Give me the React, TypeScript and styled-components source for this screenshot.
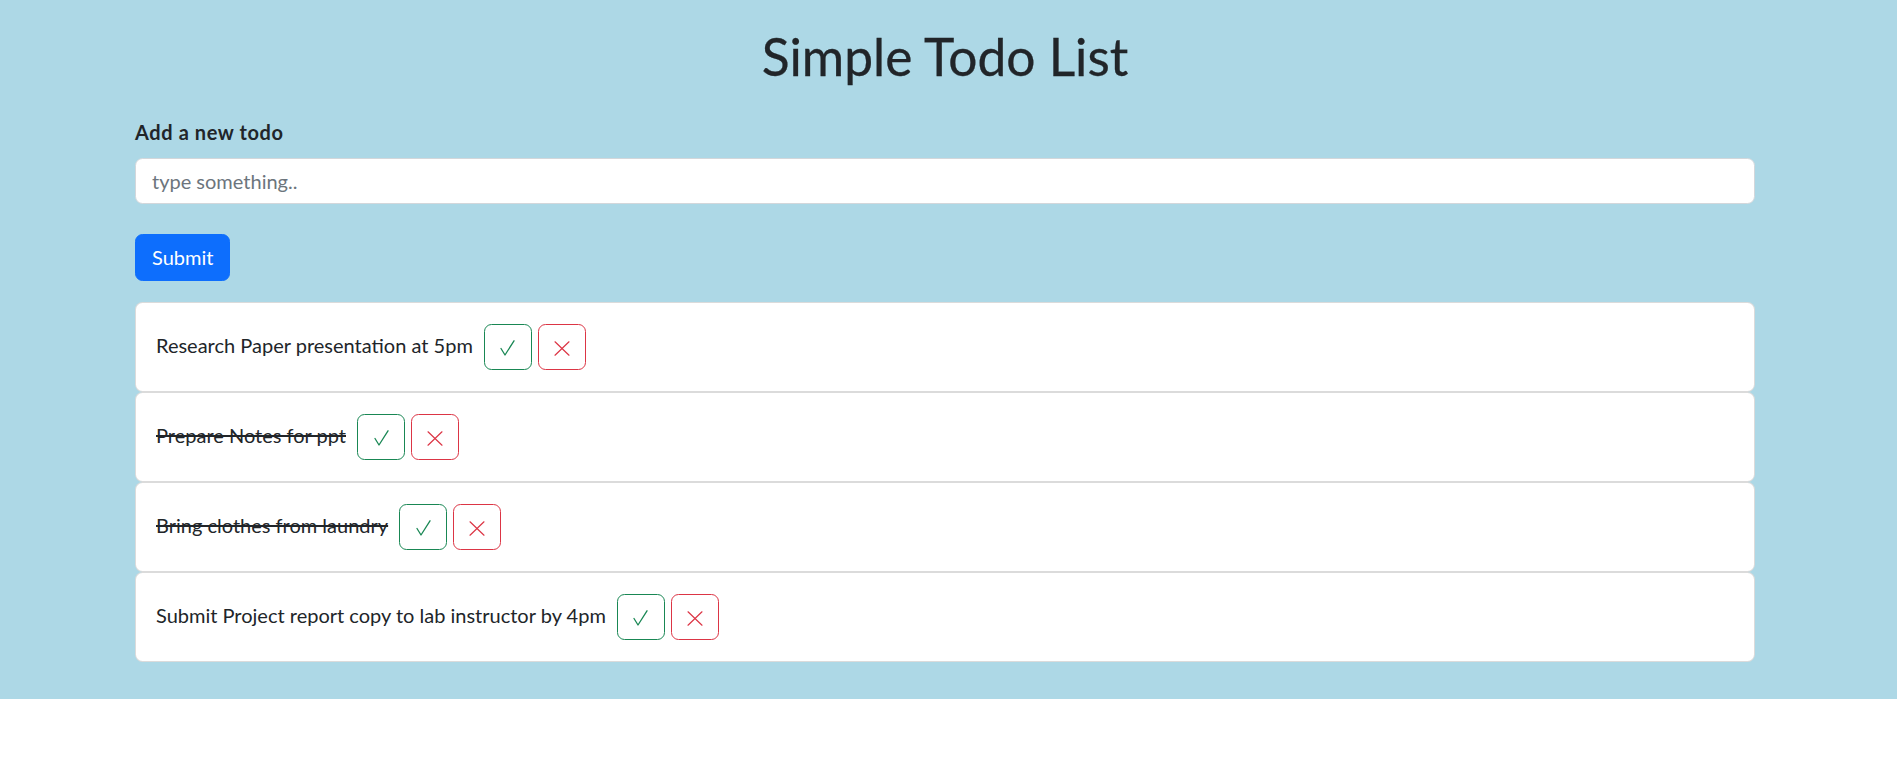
import React from "react";
import styled, { createGlobalStyle } from "styled-components";

const GlobalStyle = createGlobalStyle`
  html, body {
    margin: 0;
    padding: 0;
    background: #ffffff;
  }
  body {
    font-family: Lato, "Noto Sans", sans-serif;
    color: #212529;
  }
  * { box-sizing: border-box; }
`;

const Page = styled.div`
  background: #add8e6;
  padding: 26px 0 37px;
`;

const Container = styled.div`
  margin: 0 142px 0 135px;
`;

const Title = styled.h1`
  margin: 0 0 29px;
  font-size: 51.5px;
  font-weight: 400;
  line-height: 1.2;
  text-align: center;
  color: #212529;
  -webkit-text-stroke: 0.3px #212529;
`;

const Form = styled.form`
  display: flex;
  flex-direction: column;
  align-items: flex-start;
  margin-bottom: 21px;
`;

const Label = styled.label`
  display: block;
  font-size: 20px;
  font-weight: 700;
  line-height: 30px;
  letter-spacing: 0.6px;
  margin-bottom: 11px;
`;

const Input = styled.input`
  width: 100%;
  height: 46px;
  padding: 0 16px;
  border: 1px solid #d3d7db;
  border-radius: 7.5px;
  background: #ffffff;
  font-family: Lato, "Noto Sans", sans-serif;
  font-size: 20px;
  color: #212529;
  margin-bottom: 30px;
  outline: none;
  &::placeholder {
    color: #6c757d;
  }
`;

const SubmitButton = styled.button`
  height: 47px;
  padding: 0 16px;
  border: 1px solid #0d6efd;
  border-radius: 7.5px;
  background: #0d6efd;
  color: #ffffff;
  font-family: Lato, "Noto Sans", sans-serif;
  font-size: 20px;
  line-height: 30px;
  cursor: pointer;
`;

const List = styled.div`
  display: flex;
  flex-direction: column;
`;

const Card = styled.div`
  display: flex;
  align-items: center;
  background: #ffffff;
  border: 1px solid rgba(0, 0, 0, 0.14);
  border-radius: 7.5px;
  padding: 21px 20px;
`;

const TodoText = styled.span<{ $done: boolean }>`
  font-size: 20px;
  line-height: 30px;
  padding-bottom: 4px;
  margin-right: 11px;
  color: #212529;
  text-decoration: ${(p) => (p.$done ? "line-through" : "none")};
  text-decoration-thickness: 2px;
`;

const Actions = styled.div`
  display: flex;
  gap: 6px;
`;

const ActionButton = styled.button<{ $tone: "success" | "danger" }>`
  width: 48px;
  height: 46px;
  padding: 3px 0 0;
  display: flex;
  align-items: center;
  justify-content: center;
  background: transparent;
  border: 1px solid ${(p) => (p.$tone === "success" ? "#198754" : "#dc3545")};
  border-radius: 7.5px;
  color: ${(p) => (p.$tone === "success" ? "#198754" : "#dc3545")};
  cursor: pointer;
`;

const CheckIcon = () => (
  <svg width="15" height="16" viewBox="0 0 15 16" fill="none">
    <path d="M1 8.5 L5 15 L14 0.8" stroke="currentColor" strokeWidth="1.3" strokeLinecap="round" strokeLinejoin="round" />
  </svg>
);

const CrossIcon = () => (
  <svg width="16" height="15" viewBox="0 0 16 15" fill="none">
    <path d="M1 0.8 L15 14.2 M15 0.8 L1 14.2" stroke="currentColor" strokeWidth="1.2" strokeLinecap="round" />
  </svg>
);

const todos = [
  { text: "Research Paper presentation at 5pm", done: false },
  { text: "Prepare Notes for ppt", done: true },
  { text: "Bring clothes from laundry", done: true },
  { text: "Submit Project report copy to lab instructor by 4pm", done: false },
];

export default function App() {
  return (
    <>
      <GlobalStyle />
      <Page>
        <Container>
          <Title>Simple Todo List</Title>
          <Form onSubmit={(e) => e.preventDefault()}>
            <Label htmlFor="todo">Add a new todo</Label>
            <Input id="todo" placeholder="type something.." />
            <SubmitButton type="submit">Submit</SubmitButton>
          </Form>
          <List>
            {todos.map((t) => (
              <Card key={t.text}>
                <TodoText $done={t.done}>{t.text}</TodoText>
                <Actions>
                  <ActionButton $tone="success" aria-label="complete">
                    <CheckIcon />
                  </ActionButton>
                  <ActionButton $tone="danger" aria-label="delete">
                    <CrossIcon />
                  </ActionButton>
                </Actions>
              </Card>
            ))}
          </List>
        </Container>
      </Page>
    </>
  );
}
